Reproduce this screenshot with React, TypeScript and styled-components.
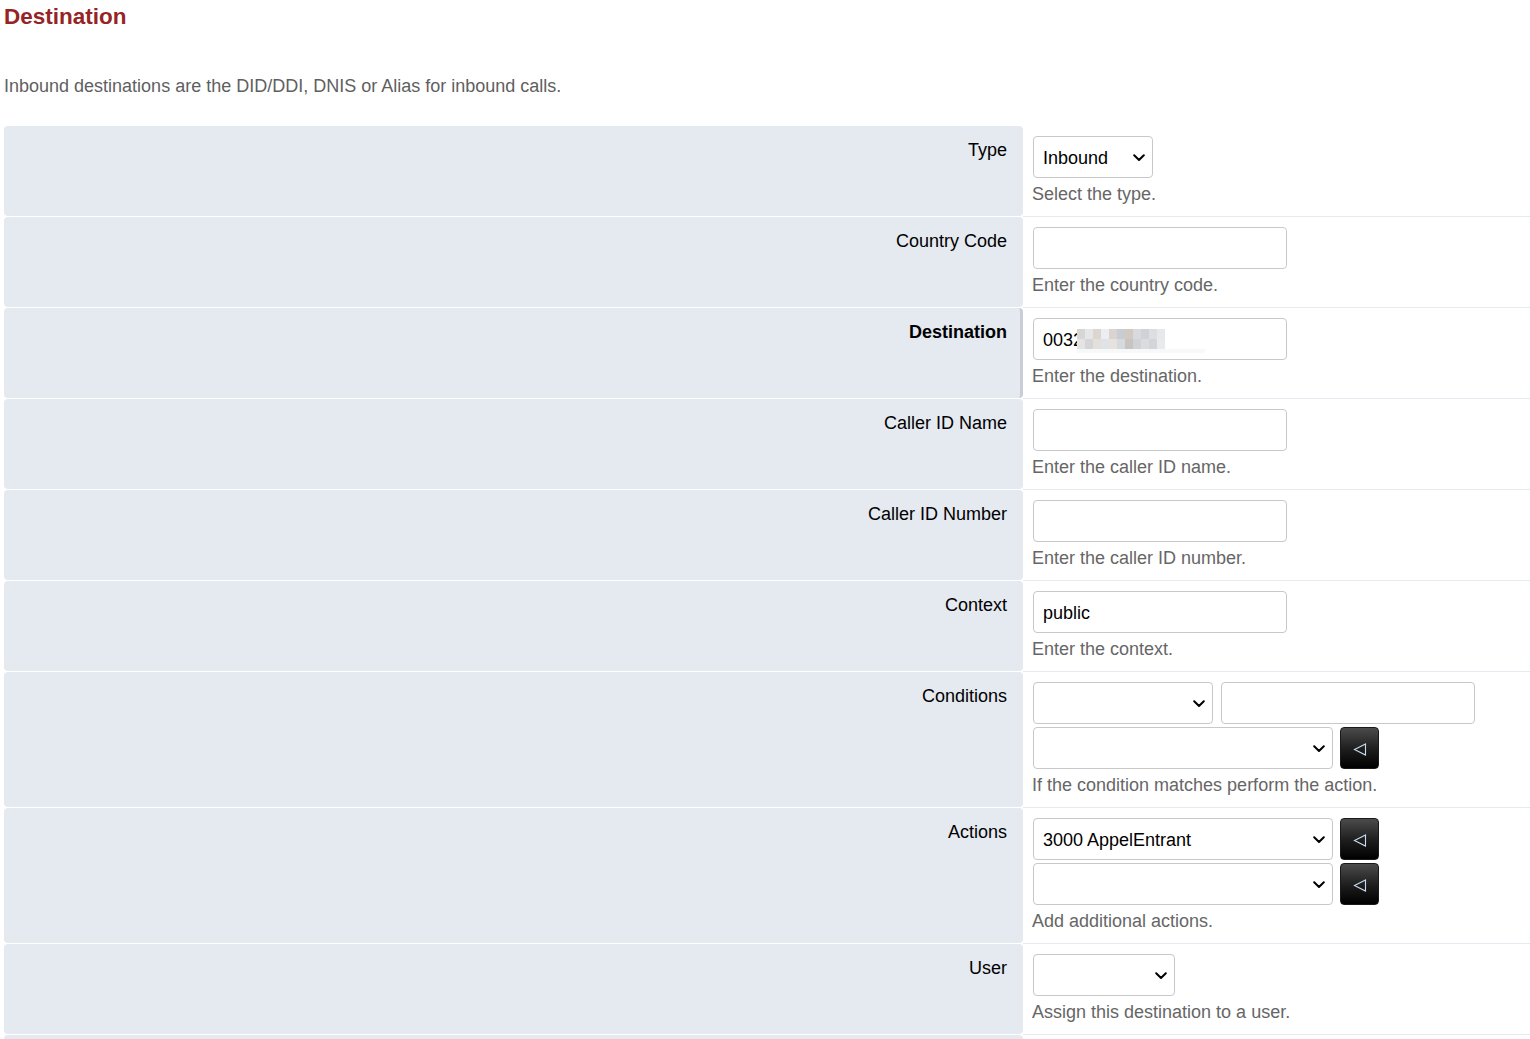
import React from 'react';
import styled, { createGlobalStyle } from 'styled-components';

const LABEL_BG = '#e5e9f0';
const LINE = '#e5e9f0';

const GlobalStyle = createGlobalStyle`
  html, body {
    margin: 0;
    padding: 0;
    background: #ffffff;
  }
  body {
    font-family: "Liberation Sans", Arial, Helvetica, sans-serif;
    color: #000;
  }
`;

const Page = styled.div`
  padding: 0 0 0 4px;
  overflow: hidden;
`;

const Title = styled.h1`
  margin: 0;
  padding-top: 4px;
  font-size: 22.5px;
  line-height: 26px;
  font-weight: bold;
  color: #952424;
`;

const Intro = styled.p`
  margin: 45px 0 29px;
  font-size: 18px;
  line-height: 22px;
  color: #5f5f5f;
`;

const Table = styled.div`
  display: grid;
  grid-template-columns: 1019px 1fr;
`;

const LabelCell = styled.div<{ $required?: boolean }>`
  background: ${LABEL_BG};
  border-radius: 4px;
  margin-bottom: 1px;
  padding: 13px ${(p) => (p.$required ? '13px' : '16px')} 0 0;
  border-right: ${(p) => (p.$required ? '3px solid #c9ced6' : 'none')};
  text-align: right;
  font-size: 18px;
  line-height: 22px;
  font-weight: ${(p) => (p.$required ? 'bold' : 'normal')};
`;

const ValueCell = styled.div`
  border-bottom: 1px solid ${LINE};
  padding: 10px 10px 9px 10px;
  display: flex;
  flex-direction: column;
  align-items: flex-start;
  gap: 3px;
`;

const Line = styled.div<{ $gap?: number }>`
  display: flex;
  align-items: center;
  gap: ${(p) => p.$gap ?? 7}px;
`;

const Description = styled.div`
  margin-left: -1px;
  font-size: 18px;
  line-height: 26px;
  color: #666666;
`;

const TextInput = styled.input`
  box-sizing: border-box;
  width: 254px;
  height: 42px;
  border: 1px solid #c8c8c8;
  border-radius: 4px;
  background: #fff;
  padding: 2px 9px 0;
  font-family: "Liberation Sans", Arial, sans-serif;
  font-size: 18px;
  color: #000;
  outline: none;
`;

const SelectWrap = styled.div<{ $width: number }>`
  position: relative;
  width: ${(p) => p.$width}px;
  height: 42px;
`;

const NativeSelect = styled.select`
  appearance: none;
  box-sizing: border-box;
  width: 100%;
  height: 42px;
  border: 1px solid #c8c8c8;
  border-radius: 4px;
  background: #fff;
  padding: 2px 30px 0 9px;
  font-family: "Liberation Sans", Arial, sans-serif;
  font-size: 18px;
  color: #000;
  outline: none;
`;

const Chevron = styled.svg`
  position: absolute;
  right: 8px;
  top: 18px;
  pointer-events: none;
`;

const ArrowButton = styled.button`
  box-sizing: border-box;
  width: 39px;
  height: 42px;
  border: 1px solid #1a1a1a;
  border-radius: 4px;
  background: linear-gradient(to bottom, #4b4b4b 0%, #1c1c1c 55%, #000 100%);
  display: flex;
  align-items: center;
  justify-content: center;
  padding: 2px 0 0 0;
  cursor: pointer;
`;

const MaskWrap = styled.div`
  position: relative;
`;

const Mosaic = styled.div`
  position: absolute;
  left: 44px;
  top: 11px;
  display: grid;
  grid-template-columns: repeat(11, 8px);
  grid-auto-rows: 10px;
  pointer-events: none;
`;

const MosaicStrip = styled.div`
  position: absolute;
  left: 44px;
  top: 31px;
  width: 128px;
  height: 4px;
  background: #f7f8fa;
  pointer-events: none;
`;

const Tile = styled.span<{ $c: string }>`
  background: ${(p) => p.$c};
`;

const mosaicColors = [
  '#d6d6d6', '#e6e6e6', '#dcd6d0', '#eceef1', '#d9d4cf', '#c9ccd3', '#d2cac2', '#d7dade', '#cfd2d6', '#dcdee1', '#e7e8ea',
  '#e4e4e4', '#d5d5d5', '#e3e0dc', '#dfe2e6', '#e6e3df', '#d6d9de', '#c8c4c0', '#cfd3d8', '#dadcdf', '#d3d5d8', '#e9eaec',
];

const ChevronIcon = () => (
  <Chevron width="12" height="8" viewBox="0 0 12 8">
    <polyline points="1.2,1.2 6,6 10.8,1.2" fill="none" stroke="#000" strokeWidth="2" strokeLinecap="round" strokeLinejoin="round" />
  </Chevron>
);

const Select: React.FC<{ width: number; value?: string }> = ({ width, value }) => (
  <SelectWrap $width={width}>
    <NativeSelect defaultValue={value || ''}>
      <option value={value || ''}>{value || ''}</option>
    </NativeSelect>
    <ChevronIcon />
  </SelectWrap>
);

const Arrow = () => (
  <ArrowButton type="button">
    <svg width="14" height="13" viewBox="0 0 14 13">
      <polygon points="12.5,1 1.5,6.5 12.5,12" fill="none" stroke="#c9dcef" strokeWidth="1.1" strokeLinejoin="miter" />
    </svg>
  </ArrowButton>
);

interface Row {
  label: string;
  required?: boolean;
  description: string;
  content: React.ReactNode;
}

const rows: Row[] = [
  { label: 'Type', description: 'Select the type.', content: <Select width={120} value="Inbound" /> },
  { label: 'Country Code', description: 'Enter the country code.', content: <TextInput /> },
  {
    label: 'Destination',
    required: true,
    description: 'Enter the destination.',
    content: (
      <MaskWrap>
        <TextInput defaultValue="0032" />
        <MosaicStrip />
        <Mosaic>
          {mosaicColors.map((c, i) => (
            <Tile key={i} $c={c} />
          ))}
        </Mosaic>
      </MaskWrap>
    ),
  },
  { label: 'Caller ID Name', description: 'Enter the caller ID name.', content: <TextInput /> },
  { label: 'Caller ID Number', description: 'Enter the caller ID number.', content: <TextInput /> },
  { label: 'Context', description: 'Enter the context.', content: <TextInput defaultValue="public" /> },
  {
    label: 'Conditions',
    description: 'If the condition matches perform the action.',
    content: (
      <>
        <Line $gap={8}>
          <Select width={180} />
          <TextInput />
        </Line>
        <Line>
          <Select width={300} />
          <Arrow />
        </Line>
      </>
    ),
  },
  {
    label: 'Actions',
    description: 'Add additional actions.',
    content: (
      <>
        <Line>
          <Select width={300} value="3000 AppelEntrant" />
          <Arrow />
        </Line>
        <Line>
          <Select width={300} />
          <Arrow />
        </Line>
      </>
    ),
  },
  { label: 'User', description: 'Assign this destination to a user.', content: <Select width={142} /> },
  { label: '', description: '', content: null },
];

export default function App() {
  return (
    <>
      <GlobalStyle />
      <Page>
        <Title>Destination</Title>
        <Intro>Inbound destinations are the DID/DDI, DNIS or Alias for inbound calls.</Intro>
        <Table>
          {rows.map((row, i) => (
            <React.Fragment key={i}>
              <LabelCell $required={row.required}>{row.label}</LabelCell>
              <ValueCell>
                {row.content}
                {row.description && <Description>{row.description}</Description>}
              </ValueCell>
            </React.Fragment>
          ))}
        </Table>
      </Page>
    </>
  );
}
